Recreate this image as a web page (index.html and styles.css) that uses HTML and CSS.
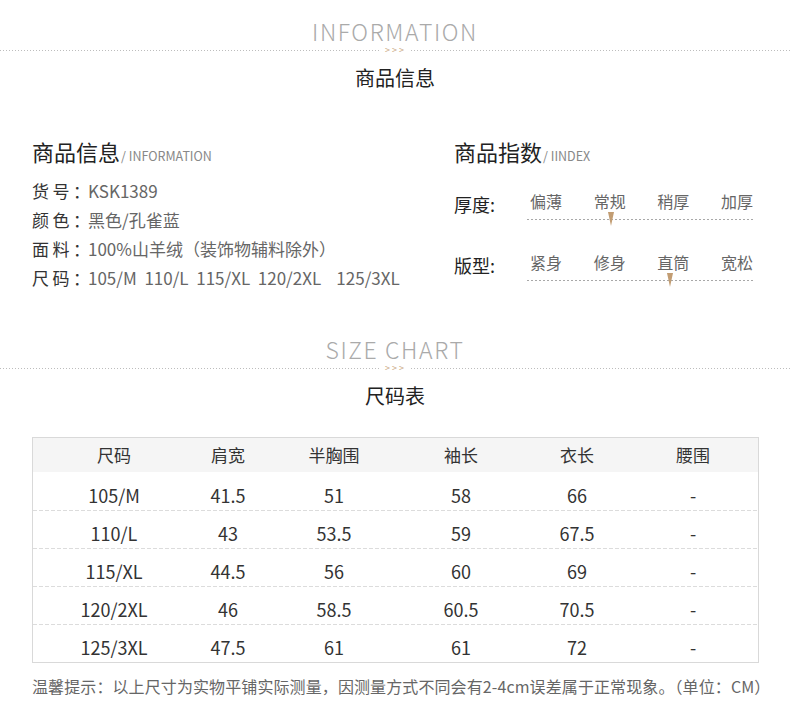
FILE: index.html
```html
<!DOCTYPE html>
<html lang="zh-CN">
<head>
<meta charset="utf-8">
<title>商品信息</title>
<link rel="stylesheet" href="styles.css">
</head>
<body>
<header class="sec-head">
  <div class="en">INFORMATION</div>
  <div class="divider"><span class="line"></span><span class="arrows">&gt;&gt;&gt;</span><span class="line"></span></div>
  <div class="cn">商品信息</div>
</header>

<section class="info">
  <div class="col-left">
    <h2 class="title">商品信息<span class="sub">/ INFORMATION</span></h2>
    <div class="row"><span class="label">货号：</span><span class="val">KSK1389</span></div>
    <div class="row"><span class="label">颜色：</span><span class="val">黑色/孔雀蓝</span></div>
    <div class="row"><span class="label">面料：</span><span class="val">100%山羊绒（装饰物辅料除外）</span></div>
    <div class="row"><span class="label">尺码：</span><span class="val">105/M&nbsp;&nbsp;110/L&nbsp;&nbsp;115/XL&nbsp;&nbsp;120/2XL&nbsp;&nbsp;&nbsp;&nbsp;125/3XL</span></div>
  </div>
  <div class="col-right">
    <h2 class="title">商品指数<span class="sub">/ IINDEX</span></h2>
    <div class="idx-list">
      <div class="idx">
        <span class="idx-label">厚度:</span>
        <div class="track">
          <div class="opts"><span>偏薄</span><span>常规</span><span>稍厚</span><span>加厚</span></div>
          <div class="dots"><i class="pin" style="left:81px"></i></div>
        </div>
      </div>
      <div class="idx">
        <span class="idx-label">版型:</span>
        <div class="track">
          <div class="opts"><span>紧身</span><span>修身</span><span>直筒</span><span>宽松</span></div>
          <div class="dots"><i class="pin" style="left:140px"></i></div>
        </div>
      </div>
    </div>
  </div>
</section>

<header class="sec-head size-head">
  <div class="en">SIZE CHART</div>
  <div class="divider"><span class="line"></span><span class="arrows">&gt;&gt;&gt;</span><span class="line"></span></div>
  <div class="cn">尺码表</div>
</header>

<div class="table">
  <div class="tr th"><span>尺码</span><span>肩宽</span><span>半胸围</span><span>袖长</span><span>衣长</span><span>腰围</span></div>
  <div class="tr"><span>105/M</span><span>41.5</span><span>51</span><span>58</span><span>66</span><span>-</span></div>
  <div class="tr"><span>110/L</span><span>43</span><span>53.5</span><span>59</span><span>67.5</span><span>-</span></div>
  <div class="tr"><span>115/XL</span><span>44.5</span><span>56</span><span>60</span><span>69</span><span>-</span></div>
  <div class="tr"><span>120/2XL</span><span>46</span><span>58.5</span><span>60.5</span><span>70.5</span><span>-</span></div>
  <div class="tr"><span>125/3XL</span><span>47.5</span><span>61</span><span>61</span><span>72</span><span>-</span></div>
</div>

<p class="note">温馨提示：以上尺寸为实物平铺实际测量，因测量方式不同会有2-4cm误差属于正常现象。（单位：CM）</p>
</body>
</html>
```

FILE: styles.css
```css
* { box-sizing: border-box; }
html, body { background: #fff; }
body {
  margin: 0;
  width: 790px;
  font-family: "Noto Sans CJK SC", "Noto Sans", sans-serif;
  color: #333;
}

/* section headers */
.sec-head { margin-top: 19px; text-align: center; }
.size-head { margin-top: 45px; }
.en {
  font-size: 23px;
  line-height: 24px;
  margin-bottom: 3px;
  font-weight: 200;
  letter-spacing: 1.6px;
  color: #aaaaaa;
}
.divider {
  display: flex;
  align-items: center;
  height: 8px;
}
.divider .line {
  flex: 1;
  height: 1px;
  background-image: linear-gradient(to right, #bdbdbd 1px, transparent 1px);
  background-size: 3px 1px;
  background-repeat: repeat-x;
}
.arrows {
  padding: 0 5px 0 6px;
  font-size: 9px;
  line-height: 8px;
  height: 8px;
  letter-spacing: 2px;
  color: #c9a680;
}
.cn {
  margin-top: 10px;
  font-size: 20px;
  line-height: 28px;
  color: #222;
}

/* info section */
.info {
  display: flex;
  align-items: flex-start;
  padding: 0 32px;
  margin-top: 44px;
}
.col-left { width: 422px; }
.col-right { flex: 1; }
.title {
  display: flex;
  align-items: baseline;
  margin: 0;
  height: 30px;
  font-size: 22px;
  line-height: 30px;
  font-weight: 400;
  color: #222;
}
.title .sub {
  font-size: 12.5px;
  line-height: 1;
  color: #888;
  margin-left: 1px;
}
.col-left .title { margin-bottom: 10px; }
.row {
  display: flex;
  font-size: 17px;
  line-height: 29px;
  height: 29px;
  white-space: nowrap;
}
.label {
  width: 56px;
  flex: none;
  letter-spacing: 3.5px;
  color: #333;
}
.val { color: #666; }

.col-right .title { margin-bottom: 25px; }
.idx-list { display: flex; flex-direction: column; gap: 32px; }
.idx { display: flex; }
.idx-label {
  width: 73px;
  padding-top: 1px;
  font-size: 18px;
  line-height: 24px;
  color: #222;
}
.track { width: 226px; }
.opts {
  display: flex;
  justify-content: space-between;
  padding-left: 3px;
  height: 20px;
  font-size: 16px;
  line-height: 20px;
  color: #666;
}
.dots {
  position: relative;
  margin-top: 8px;
  height: 1px;
  background-image: linear-gradient(to right, #a8a8a8 2px, transparent 2px);
  background-size: 4px 1px;
  background-repeat: repeat-x;
}
.pin {
  position: absolute;
  top: -7px;
  width: 0;
  height: 0;
  border-left: 3.5px solid transparent;
  border-right: 3.5px solid transparent;
  border-top: 14px solid #c29d73;
}

/* table */
.table {
  margin: 27px 31px 0 32px;
  border: 1px solid #d9d9d9;
}
.tr {
  display: grid;
  grid-template-columns: 162px 66px 146px 108px 124px 1fr;
  height: 38px;
  padding-top: 8px;
  font-size: 18px;
  line-height: 30px;
  color: #333;
  text-align: center;
  background-image: linear-gradient(to right, #dcdcdc 4px, transparent 4px);
  background-size: 6px 1px;
  background-repeat: repeat-x;
  background-position: 0 0;
}
.tr > span:last-child { padding-right: 11px; }
.th {
  height: 34px;
  padding-top: 2px;
  font-size: 17px;
  background: #f5f5f5;
}
.th + .tr { background-image: none; }

.note {
  margin: 11px 0 0 32px;
  font-size: 16px;
  line-height: 24px;
  letter-spacing: 0.1px;
  color: #666;
  white-space: nowrap;
}
```
